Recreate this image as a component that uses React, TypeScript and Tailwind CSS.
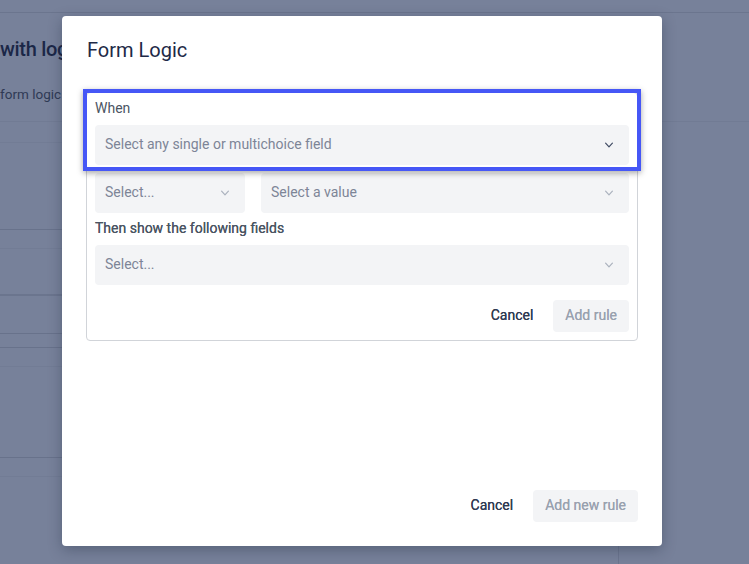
import React from "react";

function Chevron({ dark }: { dark?: boolean }) {
  return (
    <svg
      viewBox="0 0 20 20"
      fill="currentColor"
      className={dark ? "h-4 w-4 text-[#3f4a63]" : "h-4 w-4 text-[#aab1bd]"}
    >
      <path
        fillRule="evenodd"
        d="M5.23 7.21a.75.75 0 011.06.02L10 11.168l3.71-3.938a.75.75 0 111.08 1.04l-4.25 4.5a.75.75 0 01-1.08 0l-4.25-4.5a.75.75 0 01.02-1.06z"
        clipRule="evenodd"
      />
    </svg>
  );
}

function Select({ text, dark, className = "" }: { text: string; dark?: boolean; className?: string }) {
  return (
    <div
      className={
        "flex h-10 items-center justify-between rounded bg-gray-100 pl-2.5 pr-3 text-sm text-[#7d8597] " +
        className
      }
    >
      <span className="pb-[2px]">{text}</span>
      <Chevron dark={dark} />
    </div>
  );
}

export default function App() {
  return (
    <div
      className="relative h-[564px] w-[749px] overflow-hidden bg-[#77819a]"
      style={{ fontFamily: "Roboto, 'Liberation Sans', sans-serif" }}
    >
      {/* background page */}
      <div className="h-[13px] border-b border-[#6b758e]" />
      <div className="h-[109px] border-b border-[#717b94]">
        <div className="pt-[22px] text-[20px] font-medium leading-7 text-[#1b2747] whitespace-nowrap tracking-[-0.3px]">
          with logic
        </div>
        <div className="mt-[21px] text-[13.5px] leading-5 text-[#2f3a55] whitespace-nowrap">
          form logic
        </div>
      </div>
      <div className="flex">
        <div className="w-[618px]">
          <div className="h-[21px] border-b border-[#727c95]" />
          <div className="h-[87px] border-b border-[#68728b]" />
          <div className="h-[19px] border-b border-[#727c95]" />
          <div className="h-[47px] border-b-2 border-[#6b758e]" />
          <div className="h-[38px] border-b border-[#68728b]" />
          <div className="h-[14px] border-b border-[#68728b]" />
          <div className="h-[19px] border-b border-[#727c95]" />
          <div className="h-[91px] border-b border-[#68728b]" />
          <div className="h-[19px] border-b border-[#727c95]" />
        </div>
        <div className="h-[460px] flex-1 border-l border-[#6b758e]" />
      </div>

      {/* modal */}
      <div className="absolute left-[62px] top-[16px] flex h-[530px] w-[600px] flex-col rounded bg-white px-6 pb-6 pt-5 shadow-[0_4px_14px_rgba(30,40,60,0.35)]">
        <h2 className="pl-px text-[20px] leading-7 text-[#1e2a47]">Form Logic</h2>

        <div className="relative mt-7 rounded border border-[#d1d4d9] px-2 pb-2">
          <div className="mb-[7px] mt-[5px] text-sm leading-5 text-[#4b5563]">When</div>
          <Select text="Select any single or multichoice field" dark />
          <div className="mt-2 flex gap-4">
            <Select text="Select..." className="w-[150px]" />
            <Select text="Select a value" className="flex-1" />
          </div>
          <div className="mb-[7px] mt-[5px] text-sm leading-5 text-[#4b5563] [text-shadow:0_0_0.3px_#4b5563]">
            Then show the following fields
          </div>
          <Select text="Select..." />
          <div className="mt-[15px] flex justify-end gap-2">
            <button className="h-8 px-3 pb-[2px] text-sm text-[#2f3a52] [text-shadow:0_0_0.4px_#2f3a52]">Cancel</button>
            <button className="h-8 rounded bg-gray-100 px-3 pb-[2px] text-sm text-gray-400 [text-shadow:0_0_0.4px_#9ca3af]">
              Add rule
            </button>
          </div>

          {/* highlight */}
          <div className="pointer-events-none absolute left-[-4px] top-[-4px] h-[82px] w-[558px] border-4 border-[#4657f6] shadow-[0_2px_6px_rgba(0,0,0,0.35)]" />
        </div>

        <div className="mt-auto flex justify-end gap-2">
          <button className="h-8 px-3 pb-[2px] text-sm text-[#2f3a52] [text-shadow:0_0_0.4px_#2f3a52]">Cancel</button>
          <button className="h-8 rounded bg-gray-100 px-3 pb-[2px] text-sm text-gray-400 [text-shadow:0_0_0.4px_#9ca3af]">
            Add new rule
          </button>
        </div>
      </div>
    </div>
  );
}
